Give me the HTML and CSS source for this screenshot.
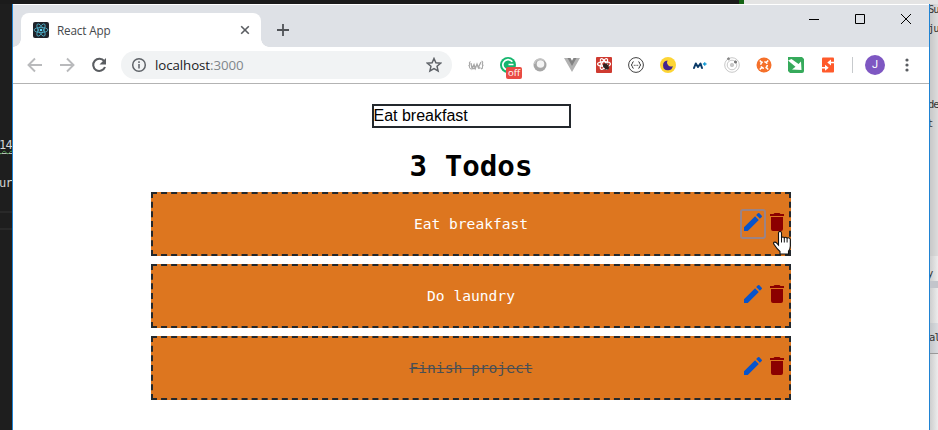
FILE: index.html
```html
<!DOCTYPE html>
<html lang="en">
<head>
<meta charset="utf-8">
<title>React App</title>
<link rel="stylesheet" href="styles.css">
</head>
<body>
<svg class="defs" width="0" height="0">
  <symbol id="pencil" viewBox="0 0 24 24"><path d="M3 17.25V21h3.75L17.81 9.94l-3.75-3.75L3 17.25zM20.71 7.04a1 1 0 0 0 0-1.41l-2.34-2.34a1 1 0 0 0-1.41 0l-1.83 1.83 3.75 3.75 1.83-1.83z"/></symbol>
  <symbol id="trash" viewBox="0 0 24 24"><path d="M6 19a2 2 0 0 0 2 2h8a2 2 0 0 0 2-2V7H6v12zM19 4h-3.500l-1-1h-5l-1 1H5v2h14V4z"/></symbol>
</svg>
<div class="desktop">
  <div class="strip"><span class="strip-dark"></span><span class="strip-green"></span><span class="strip-light"></span></div>
  <div class="behind-left">
    <span class="frag frag-14">14</span>
    <span class="frag frag-ur">ur</span>
    <span class="rule rule-a"></span>
    <span class="rule rule-b"></span>
  </div>
  <div class="window">
    <header class="titlebar">
      <div class="tab">
        <svg class="favicon" viewBox="0 0 16 16"><rect width="16" height="16" rx="2" fill="#20232a"/><g fill="none" stroke="#4fb3cc" stroke-width=".8"><ellipse cx="8" cy="8" rx="6.900" ry="2.600"/><ellipse cx="8" cy="8" rx="6.900" ry="2.600" transform="rotate(60 8 8)"/><ellipse cx="8" cy="8" rx="6.900" ry="2.600" transform="rotate(120 8 8)"/></g><circle cx="8" cy="8" r="1.300" fill="#61dafb"/></svg>
        <span class="tab-title">React App</span>
        <svg class="tab-close" viewBox="0 0 10 10"><path d="M1.200 1.200l7.600 7.600M8.800 1.200L1.200 8.800"/></svg>
      </div>
      <svg class="new-tab" viewBox="0 0 12 12"><path d="M6 0v12M0 6h12"/></svg>
      <div class="controls">
        <svg viewBox="0 0 46 28"><path d="M18 14.500h10"/></svg>
        <svg viewBox="0 0 46 28"><path d="M18.500 9.500h9v9h-9z"/></svg>
        <svg viewBox="0 0 46 28"><path d="M18 9l10 10M28 9L18 19"/></svg>
      </div>
    </header>
    <div class="toolbar">
      <div class="nav">
        <svg viewBox="0 0 32 24"><path class="arrow" d="M23 12H10M16 5.500L9.500 12l6.500 6.500"/></svg>
        <svg viewBox="0 0 32 24"><path class="arrow" d="M9 12h13M16 5.500L22.500 12 16 18.500"/></svg>
        <svg viewBox="0 0 32 24"><path class="reload" d="M21.200 8.200a6.100 6.100 0 1 0 .8 5.800"/><path fill="#5a5d61" d="M23 5v6.500h-6.500z"/></svg>
      </div>
      <div class="omnibox">
        <svg class="info" viewBox="0 0 16 16"><circle cx="8" cy="8" r="6.300"/><path d="M8 7v4.500M8 4.300v1.700"/></svg>
        <span class="url">localhost<span class="port">:3000</span></span>
        <svg class="star" viewBox="0 0 16 16"><path d="M8 1.500l1.900 4.300 4.700.4-3.550 3.100 1.050 4.600L8 11.500l-4.100 2.400 1.050-4.600L1.400 6.200l4.700-.4z"/></svg>
      </div>
      <div class="extensions">
        <div class="ext"><svg viewBox="0 0 16 16" fill="none" stroke="#a7a7a7" stroke-width="1.100"><path d="M2.500 4.500Q.8 5.500 1.500 7T.5 8.500Q1.800 9 1.500 10t1.500 2M13.500 4Q15.200 4.500 14.500 6.500T15.500 8Q14.200 8.500 14.500 10t-1.500 2"/><path d="M3 6l1 5.500 2-4 1.300 4L9 7l1.300 3.500L13 5M4 11.500h3.500M10 11h2.500" stroke-width="1.300"/></svg></div>
        <div class="ext"><svg viewBox="0 0 16 16"><circle cx="8" cy="8" r="8" fill="#15b66e"/><path d="M12.300 4.800A5.200 5.200 0 1 0 8 13M8.500 7.500h5" fill="none" stroke="#fff" stroke-width="1.700"/></svg><span class="badge">off</span></div>
        <div class="ext"><svg viewBox="0 0 16 16"><circle cx="8" cy="8" r="6.500" fill="#a6a6a6"/><circle cx="8.500" cy="7" r="3.800" fill="#f4f4f4"/><path d="M2.500 7a5.700 5.700 0 0 1 9.500-3.500" fill="none" stroke="#c4c4c4" stroke-width="1.500"/></svg></div>
        <div class="ext"><svg viewBox="0 0 16 16"><path d="M0 1h5l3 5 3-5h5L8 15z" fill="#b2b2b2"/><path d="M3.500 1h3L8 3.700 9.500 1h3L8 9z" fill="#828282"/></svg></div>
        <div class="ext"><svg viewBox="0 0 16 16"><rect width="16" height="16" rx="1" fill="#cf3b31"/><g fill="none" stroke="#fff" stroke-width="1.200"><ellipse cx="8" cy="7" rx="6.500" ry="2.300"/><ellipse cx="8" cy="7" rx="6" ry="2.300" transform="rotate(60 8 7)"/><ellipse cx="8" cy="7" rx="6" ry="2.300" transform="rotate(120 8 7)"/></g><ellipse cx="10" cy="9.500" rx="2.200" ry="3.600" transform="rotate(-40 10 9.500)" fill="#30211f"/><path d="M7 10l6-2M9 13l2-7" stroke="#30211f"/></svg></div>
        <div class="ext"><svg viewBox="0 0 16 16" fill="none" stroke="#424242"><circle cx="8" cy="8" r="7.400"/><path d="M5.700 4.700q-1.300 0-1.300 1.500T3 8q1.400.3 1.400 1.800t1.300 1.500M10.300 4.700q1.300 0 1.300 1.500T13 8q-1.400.3-1.400 1.800t-1.300 1.500M5.800 8.300h1M7.500 8.300h1M9.200 8.300h1"/></svg></div>
        <div class="ext"><svg viewBox="0 0 16 16"><circle cx="8" cy="8" r="8" fill="#fdd535"/><path d="M7.500 3.500A4.900 4.900 0 1 0 12.800 9 4 4 0 0 1 7.500 3.500z" fill="#43258f"/></svg></div>
        <div class="ext"><svg viewBox="0 0 16 16" fill="none" stroke="#0b3b68"><path d="M2 11l1.800-4.500L6 10l2.500-3.500L10 11" stroke-width="2" stroke-linejoin="round" stroke-linecap="round"/><path d="M12.700 5.200v3.600M10.900 7h3.600" stroke="#159bd5" stroke-width="1.300"/></svg></div>
        <div class="ext"><svg viewBox="0 0 16 16" fill="none" stroke="#c8c8c8"><circle cx="8" cy="8" r="7.300"/><circle cx="8" cy="8" r="4.800"/><circle cx="8" cy="8" r="1.700" fill="#c8c8c8"/><circle cx="4.500" cy="1.800" r="1" fill="#888" stroke="#888"/><circle cx="11.500" cy="5" r="1.100" fill="#777" stroke="#777"/></svg></div>
        <div class="ext"><svg viewBox="0 0 16 16"><circle cx="8" cy="8" r="7.500" fill="#f5702a"/><g fill="none" stroke="#fff" stroke-width="1.600"><circle cx="8" cy="8" r="3.300" stroke-dasharray="3.400 1.780"/><path d="M3.800 3.500l2 2M12.200 3.500l-2 2M3.800 12.500l2-2M12.200 12.500l-2-2"/></g></svg></div>
        <div class="ext"><svg viewBox="0 0 16 16"><path d="M0 0h14l2 2v12a2 2 0 0 1-2 2H2L0 14z" fill="#36aa5b"/><path d="M0 3.500L3.500 2l7 5L13 4.500l.5 8.500L4 12.500 7.500 9.800z" fill="#fff"/></svg></div>
        <div class="ext"><svg viewBox="0 0 16 16"><rect x="2" y=".500" width="12" height="15" rx="1" fill="#ff5a2b"/><path d="M14 5.500h-4M2 10.700h4" stroke="#fff" stroke-width="1.600"/><path d="M11 2.500v6L7.300 5.500zM5 7.700v6l3.700-3z" fill="#fff"/></svg></div>
      </div>
      <span class="divider"></span>
      <span class="avatar">J</span>
      <svg class="menu" viewBox="0 0 4 14"><circle cx="2" cy="2" r="1.600"/><circle cx="2" cy="7" r="1.600"/><circle cx="2" cy="12" r="1.600"/></svg>
    </div>
    <main class="page">
      <input class="todo-input" type="text" value="Eat breakfast">
      <h1>3 Todos</h1>
      <ul class="todos">
        <li class="todo">
          <span class="todo-text">Eat breakfast</span>
          <div class="actions">
            <button class="edit focused" aria-label="Edit"><svg><use href="#pencil"/></svg></button>
            <button class="delete" aria-label="Delete"><svg><use href="#trash"/></svg></button>
          </div>
          <svg class="cursor" viewBox="0 0 18 24"><path d="M5.500 14V2a1.500 1.500 0 0 1 3 0V7q.2-1 1.400-1t1.400 1.200q.2-.9 1.400-.9t1.400 1.300q.2-.8 1.300-.8t1.900 1.400V15q0 3-1.800 5v3H7v-2.500Q4 18 1.500 14q-1.500-2-.5-2.700 1.500-.6 3 1z" fill="#fff" stroke="#111" stroke-width="1.100"/><path d="M8.500 7v4.500M11.300 7v4.500M14.100 7.500v4" stroke="#111"/></svg>
        </li>
        <li class="todo">
          <span class="todo-text">Do laundry</span>
          <div class="actions">
            <button class="edit" aria-label="Edit"><svg><use href="#pencil"/></svg></button>
            <button class="delete" aria-label="Delete"><svg><use href="#trash"/></svg></button>
          </div>
        </li>
        <li class="todo">
          <span class="todo-text done">Finish project</span>
          <div class="actions">
            <button class="edit" aria-label="Edit"><svg><use href="#pencil"/></svg></button>
            <button class="delete" aria-label="Delete"><svg><use href="#trash"/></svg></button>
          </div>
        </li>
      </ul>
    </main>
  </div>
  <div class="behind-right">
    <span class="frag frag-su">Su</span>
    <span class="frag frag-ju">ju</span>
    <span class="frag frag-de">de</span>
    <span class="frag frag-t">t</span>
    <span class="panel panel-a"></span>
    <span class="panel panel-b"></span>
    <span class="panel panel-c"></span>
    <span class="frag frag-v">y</span>
    <span class="frag frag-al">al</span>
  </div>
</div>
</body>
</html>
```
FILE: styles.css
```css
* { box-sizing: border-box; }
body { margin: 0; width: 938px; height: 430px; overflow: hidden; font-family: "Open Sans", sans-serif; }
svg { display: block; flex: none; }
.defs { position: absolute; }

.desktop {
  display: grid;
  grid-template: 4px 426px / 12px 918px 8px;
}
.strip { grid-column: 1 / -1; display: flex; }
.strip-dark { width: 739px; background: #1b1b1b; }
.strip-green { width: 5px; background: #146414; }
.strip-light { flex: 1; background: #e4e4e4; }

.behind-left, .behind-right { position: relative; overflow: hidden; }
.behind-left { background: #1e1e1e; color: #d4d4d4; }
.behind-right { background: linear-gradient(90deg, #c8c8c8, #dcdcdc); color: #333; }
.frag { position: absolute; left: 0; font: 12px/14px "DejaVu Sans Mono", monospace; letter-spacing: -.6px; }
.frag-14 { left: -1px; top: 134px; height: 16px; border-bottom: 1px solid #bbb; text-decoration: underline wavy #4e9a4e 1px; }
.frag-ur { left: -1px; top: 172px; }
.rule { position: absolute; left: 0; width: 12px; height: 2px; background: #292929; }
.rule-a { top: 207px; }
.rule-b { top: 224px; }
.behind-right .frag { font-size: 10.500px; left: -2px; letter-spacing: -1px; }
.behind-right .frag-su { top: -2px; }
.behind-right .frag-ju { top: 17px; }
.behind-right .frag-de { top: 93px; }
.behind-right .frag-t { top: 112px; left: -3px; }
.behind-right .frag-v { top: 262px; left: -3px; }
.behind-right .frag-al { top: 326px; left: -1px; }
.panel { position: absolute; left: 0; width: 8px; }
.panel-a { top: 252px; height: 174px; background: linear-gradient(90deg, #cecece, #ececec); }
.panel-b { top: 277px; height: 7px; background: #c3c5cb; }
.panel-c { top: 319px; height: 31px; background: linear-gradient(90deg, #c4c6c9, #d9dce0); border-bottom: 1px solid #999; }

.window {
  display: flex;
  flex-direction: column;
  border: solid #1f83d3;
  border-width: 0 1px;
  background: #fff;
}
.titlebar {
  display: flex;
  height: 43px;
  padding: 8px 0 0 8px;
  border-top: 1px solid #fff;
  background: #dee1e6;
}
.tab {
  position: relative;
  display: flex;
  align-items: center;
  width: 240px;
  height: 34px;
  padding: 0 12px;
  border-radius: 8px 8px 0 0;
  background: #fff;
}
.tab::before, .tab::after {
  content: "";
  position: absolute;
  bottom: 0;
  width: 8px;
  height: 8px;
}
.tab::before { left: -8px; background: radial-gradient(circle at 0 0, transparent 7.500px, #fff 8px); }
.tab::after { right: -8px; background: radial-gradient(circle at 100% 0, transparent 7.500px, #fff 8px); }
.favicon { width: 16px; height: 16px; }
.tab-title { flex: 1; margin-left: 8px; font-size: 11.700px; line-height: 16px; letter-spacing: -.15px; color: #45484c; }
.tab-close { width: 10px; height: 10px; margin-right: -1px; fill: none; stroke: #5a5d61; stroke-width: 1.600; }
.new-tab { width: 12px; height: 12px; margin: 11px 0 0 16px; fill: none; stroke: #505357; stroke-width: 1.800; }
.controls { display: flex; margin: -8px 0 0 auto; }
.controls svg { width: 46px; height: 28px; fill: none; stroke: #000; }

.toolbar {
  display: flex;
  align-items: center;
  height: 37px;
  padding-left: 6px;
  border-bottom: 1px solid #b3b3b3;
}
.nav { display: flex; width: 102px; }
.nav svg { width: 32px; height: 24px; fill: none; stroke-width: 1.900; }
.arrow { stroke: #b9babc; }
.reload { stroke: #5a5d61; stroke-width: 2.100; }
.omnibox {
  display: flex;
  align-items: center;
  width: 331px;
  height: 28px;
  padding: 0 10px;
  border-radius: 14px;
  background: #f1f3f4;
}
.info { width: 16px; height: 16px; fill: none; stroke: #5f6368; stroke-width: 1.500; }
.url { flex: 1; margin-left: 8px; font-size: 13.300px; line-height: 18px; letter-spacing: -.08px; color: #202124; }
.port { color: #80868b; }
.star { width: 16px; height: 16px; fill: none; stroke: #5f6368; stroke-width: 1.500; }
.extensions { display: flex; margin-left: 8px; }
.ext { position: relative; display: grid; place-items: center; width: 32px; height: 24px; }
.ext svg { width: 16px; height: 16px; }
.badge {
  position: absolute;
  left: 14px;
  top: 14px;
  width: 16px;
  height: 12px;
  border-radius: 2px;
  background: #e94b43;
  color: #fff;
  font: 9.500px/12px "Open Sans", sans-serif;
  text-align: center;
}
.divider { width: 1px; height: 16px; margin-left: 8px; background: #c7cacd; }
.avatar {
  width: 20px;
  height: 20px;
  margin-left: 12px;
  border-radius: 50%;
  background: #7e57c2;
  color: #fff;
  font: 11px/20px Roboto, sans-serif;
  text-align: center;
}
.menu { width: 4px; height: 14px; margin-left: 20px; fill: #5a5d61; }

.page {
  display: flex;
  flex-direction: column;
  align-items: center;
  padding-top: 20px;
  font-family: "DejaVu Sans Mono", monospace;
}
.todo-input {
  width: 199px;
  height: 24px;
  padding: 0;
  border: 2px solid #23282d;
  outline: none;
  font: 16px/20px "Liberation Sans", Arial, sans-serif;
  color: #000;
}
h1 { margin: 19px 0 7px; font-size: 29.200px; line-height: 38px; }
.todos { display: grid; gap: 8px; width: 640px; margin: 0; padding: 0; list-style: none; }
.todo {
  position: relative;
  display: grid;
  grid-template-columns: 48px 1fr 48px;
  align-items: center;
  height: 64px;
  border: 2px dashed #23282d;
  background: #dd761f;
}
.todo-text { grid-column: 2; justify-self: center; font-size: 14.600px; line-height: 20px; color: #fff; }
.done { color: #4a4f54; text-decoration: line-through; }
.actions { display: flex; }
.actions button { width: 24px; height: 28px; padding: 0 0 4px; border: 0; background: none; }
.actions svg { width: 24px; height: 24px; }
.edit { fill: #0754cc; }
.delete { fill: #8b0000; }
.actions .focused { outline: 2px solid #9b8385; outline-offset: -1px; border-radius: 2px; }
.cursor { position: absolute; left: 620px; top: 37px; width: 18px; height: 24px; }
```
